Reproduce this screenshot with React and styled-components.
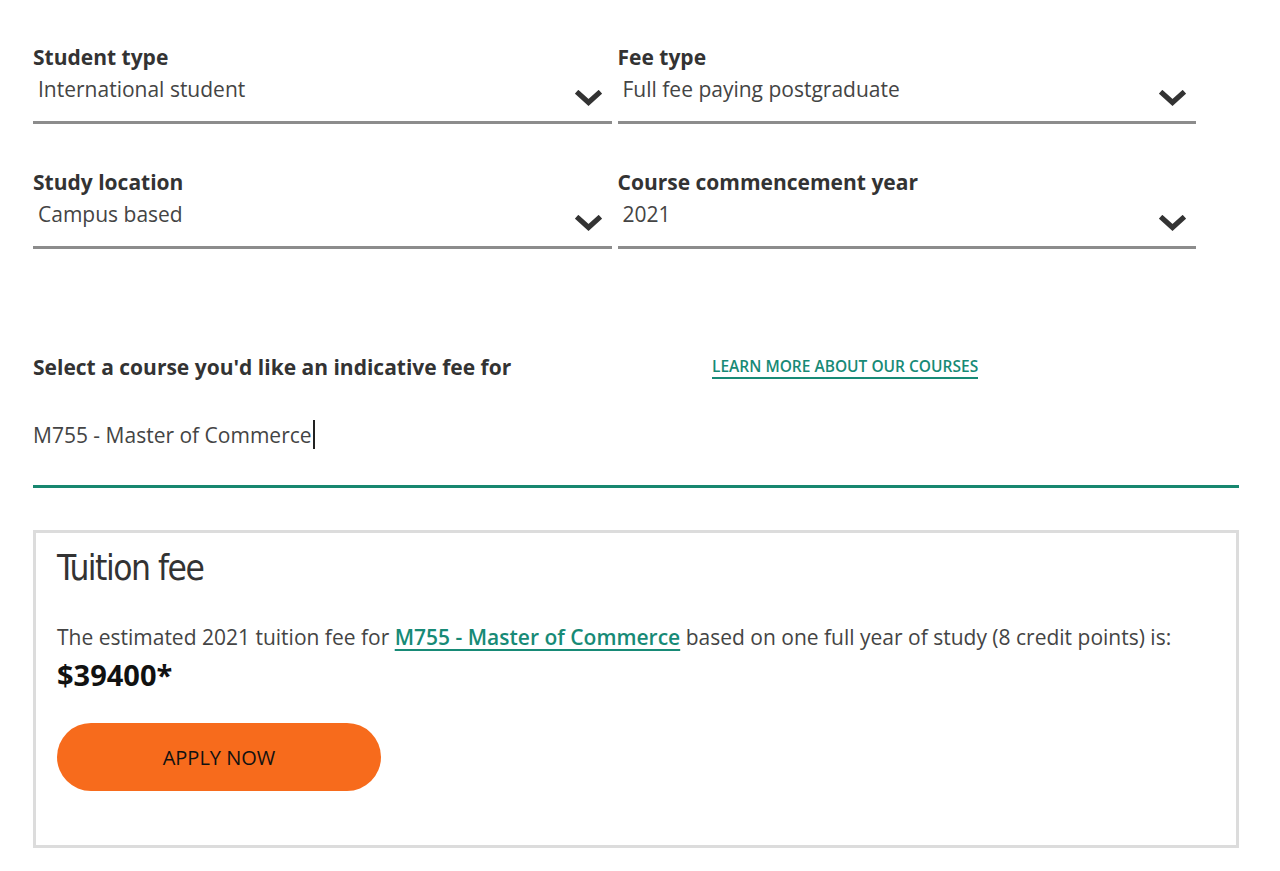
import React from "react";
import styled, { createGlobalStyle } from "styled-components";

const Global = createGlobalStyle`
  * { box-sizing: border-box; }
  html, body { margin: 0; padding: 0; background: #fff; }
  body { font-family: "Open Sans", "Noto Sans", sans-serif; color: #333; }
`;

const Page = styled.div`
  width: 1206px;
  margin-left: 33px;
  padding-top: 43px;
`;

const SelectGrid = styled.div`
  width: 1163px;
  display: grid;
  grid-template-columns: 1fr 1fr;
  column-gap: 6px;
  row-gap: 44px;
`;

const Field = styled.div`
  display: flex;
  flex-direction: column;
`;

const Label = styled.div`
  font-size: 21px;
  line-height: 28px;
  font-weight: 700;
  color: #333;
`;

const SelectBox = styled.div`
  margin-top: 4px;
  height: 49px;
  display: flex;
  justify-content: space-between;
  align-items: flex-start;
  padding: 0 10px 0 5px;
  border-bottom: 3px solid #8c8c8c;
`;

const Value = styled.span`
  font-size: 21px;
  line-height: 28px;
  color: #444;
`;

const Chevron = styled.svg`
  width: 27px;
  height: 17px;
  margin-top: 15px;
  flex: none;
`;

const CourseHead = styled.div`
  margin-top: 104px;
  display: flex;
  align-items: center;
`;

const CourseLabel = styled(Label)`
  width: 679px;
`;

const LearnLink = styled.a`
  font-size: 15.5px;
  line-height: 21px;
  font-weight: 600;
  color: #178a76;
  text-decoration: none;
  border-bottom: 2px solid #178a76;
`;

const CourseInput = styled.div`
  margin-top: 40px;
  height: 67px;
  border-bottom: 3px solid #17876f;
  font-size: 21px;
  line-height: 28px;
  color: #444;
  display: flex;
  align-items: flex-start;
`;

const Caret = styled.span`
  display: inline-block;
  width: 2px;
  height: 29px;
  background: #222;
  margin-left: 1px;
  margin-top: -1px;
`;

const Card = styled.section`
  margin-top: 42px;
  border: 3px solid #dcdcdc;
  padding: 15px 21px 54px;
`;

const CardTitle = styled.h2`
  margin: 0;
  font-family: "DejaVu Sans Condensed", "Roboto", sans-serif;
  font-weight: 300;
  font-size: 35px;
  line-height: 40px;
  color: #333;
  letter-spacing: -1.5px;
`;

const Para = styled.p`
  margin: 35px 0 0;
  font-size: 21px;
  line-height: 28px;
  color: #444;
`;

const InlineLink = styled.a`
  color: #178a76;
  font-weight: 600;
  text-decoration: underline;
  text-decoration-thickness: 2px;
  text-underline-offset: 4px;
`;

const Amount = styled.div`
  margin-top: 6px;
  font-size: 29px;
  line-height: 36px;
  font-weight: 700;
  color: #111;
`;

const ApplyButton = styled.button`
  margin-top: 30px;
  width: 324px;
  height: 68px;
  border: none;
  border-radius: 34px;
  background: #f76b1c;
  color: #111;
  font-family: "Open Sans", sans-serif;
  font-size: 20px;
  font-weight: 500;
  cursor: pointer;
`;

const ChevronIcon = () => (
  <Chevron viewBox="0 0 27 17">
    <path d="M3.5 3.5 L13.5 12.5 L23.5 3.5" fill="none" stroke="#333" strokeWidth="5.2" strokeLinecap="square" strokeLinejoin="miter" />
  </Chevron>
);

const Select = ({ label, value }) => (
  <Field>
    <Label>{label}</Label>
    <SelectBox>
      <Value>{value}</Value>
      <ChevronIcon />
    </SelectBox>
  </Field>
);

export default function App() {
  return (
    <>
      <Global />
      <Page>
        <SelectGrid>
          <Select label="Student type" value="International student" />
          <Select label="Fee type" value="Full fee paying postgraduate" />
          <Select label="Study location" value="Campus based" />
          <Select label="Course commencement year" value="2021" />
        </SelectGrid>
        <CourseHead>
          <CourseLabel>Select a course you'd like an indicative fee for</CourseLabel>
          <LearnLink href="#">LEARN MORE ABOUT OUR COURSES</LearnLink>
        </CourseHead>
        <CourseInput>
          M755 - Master of Commerce
          <Caret />
        </CourseInput>
        <Card>
          <CardTitle>Tuition fee</CardTitle>
          <Para>
            The estimated 2021 tuition fee for <InlineLink href="#">M755 - Master of Commerce</InlineLink> based on one full year of study (8 credit points) is:
          </Para>
          <Amount>$39400*</Amount>
          <ApplyButton>APPLY NOW</ApplyButton>
        </Card>
      </Page>
    </>
  );
}
